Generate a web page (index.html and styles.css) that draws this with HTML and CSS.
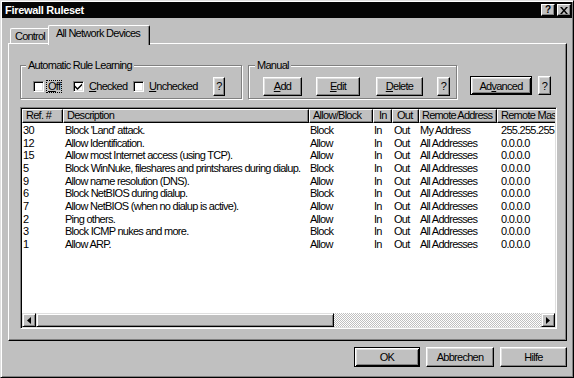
FILE: index.html
```html
<!DOCTYPE html>
<html>
<head>
<meta charset="utf-8">
<link rel="stylesheet" href="styles.css">
</head>
<body>
<div class="dialog">
  <div class="titlebar">
    <span class="title">Firewall Ruleset</span>
    <div class="tbtns">
      <div class="tbtn"><span class="qglyph">?</span></div>
      <div class="tbtn">
        <svg width="8" height="7" viewBox="0 0 8 7"><path d="M0 0h2l2 2.5L6 0h2L5 3.5 8 7H6L4 4.5 2 7H0l3-3.5z" fill="#000"/></svg>
      </div>
    </div>
  </div>
  <div class="body">
    <div class="tabs">
      <div class="tab">Control</div>
      <div class="tab active">All Network Devices</div>
    </div>
    <div class="panel">
      <div class="controls">
        <fieldset class="group auto">
          <legend>Automatic Rule Learning</legend>
          <div class="check c1"><span class="box"></span><span class="lbl focus"><u>O</u>ff</span></div>
          <div class="check c2"><span class="box"><svg width="7" height="7" viewBox="0 0 7 7"><path d="M0 2.5l2.5 2.5L7 0.5v2L2.5 7 0 4.5z" fill="#000"/></svg></span><span class="lbl"><u>C</u>hecked</span></div>
          <div class="check c3"><span class="box"></span><span class="lbl"><u>U</u>nchecked</span></div>
          <div class="btn qbtn small">?</div>
        </fieldset>
        <fieldset class="group manual">
          <legend>Manual</legend>
          <div class="btn b-add"><u>A</u>dd</div>
          <div class="btn b-edit"><u>E</u>dit</div>
          <div class="btn b-del"><u>D</u>elete</div>
          <div class="btn qbtn">?</div>
        </fieldset>
        <div class="btn default b-adv">Ad<u>v</u>anced</div>
        <div class="btn qbtn b-q2">?</div>
      </div>
      <div class="list">
        <div class="rows-area">
          <div class="grid header">
            <div class="hc">Ref. #</div>
            <div class="hc">Description</div>
            <div class="hc">Allow/Block</div>
            <div class="hc c-in">In</div>
            <div class="hc c-out">Out</div>
            <div class="hc c-ra">Remote Address</div>
            <div class="hc">Remote Mask</div>
          </div>
          <div class="rows">
            <div class="grid row"><span>30</span><span>Block 'Land' attack.</span><span>Block</span><span>In</span><span>Out</span><span>My Address</span><span class="mask">255.255.255.255</span></div>
            <div class="grid row"><span>12</span><span>Allow Identification.</span><span>Allow</span><span>In</span><span>Out</span><span>All Addresses</span><span class="mask">0.0.0.0</span></div>
            <div class="grid row"><span>15</span><span>Allow most Internet access (using TCP).</span><span>Allow</span><span>In</span><span>Out</span><span>All Addresses</span><span class="mask">0.0.0.0</span></div>
            <div class="grid row"><span>5</span><span>Block WinNuke, fileshares and printshares during dialup.</span><span>Block</span><span>In</span><span>Out</span><span>All Addresses</span><span class="mask">0.0.0.0</span></div>
            <div class="grid row"><span>9</span><span>Allow name resolution (DNS).</span><span>Allow</span><span>In</span><span>Out</span><span>All Addresses</span><span class="mask">0.0.0.0</span></div>
            <div class="grid row"><span>6</span><span>Block NetBIOS during dialup.</span><span>Block</span><span>In</span><span>Out</span><span>All Addresses</span><span class="mask">0.0.0.0</span></div>
            <div class="grid row"><span>7</span><span>Allow NetBIOS (when no dialup is active).</span><span>Allow</span><span>In</span><span>Out</span><span>All Addresses</span><span class="mask">0.0.0.0</span></div>
            <div class="grid row"><span>2</span><span>Ping others.</span><span>Allow</span><span>In</span><span>Out</span><span>All Addresses</span><span class="mask">0.0.0.0</span></div>
            <div class="grid row"><span>3</span><span>Block ICMP nukes and more.</span><span>Block</span><span>In</span><span>Out</span><span>All Addresses</span><span class="mask">0.0.0.0</span></div>
            <div class="grid row"><span>1</span><span>Allow ARP.</span><span>Allow</span><span>In</span><span>Out</span><span>All Addresses</span><span class="mask">0.0.0.0</span></div>
          </div>
        </div>
        <div class="hscroll">
          <div class="sbtn"><svg width="4" height="7" viewBox="0 0 4 7"><path d="M4 0v7L0 3.5z" fill="#000"/></svg></div>
          <div class="thumb"></div>
          <div class="track"></div>
          <div class="sbtn"><svg width="4" height="7" viewBox="0 0 4 7"><path d="M0 0v7l4-3.5z" fill="#000"/></svg></div>
        </div>
      </div>
    </div>
    <div class="footer">
      <div class="btn default b-ok">OK</div>
      <div class="btn b-cancel">Abbrechen</div>
      <div class="btn b-help">Hilfe</div>
    </div>
  </div>
</div>
</body>
</html>
```
FILE: styles.css
```css
* { box-sizing: border-box; }
html, body { margin: 0; padding: 0; }
body {
  width: 574px;
  height: 378px;
  overflow: hidden;
  background: #c0c0c0;
  font-family: "Liberation Sans", Arial, sans-serif;
  font-size: 11px;
  letter-spacing: -0.72px;
  color: #000;
}
u { text-decoration: underline; text-underline-offset: 1px; }

.dialog {
  width: 574px;
  height: 378px;
  display: flex;
  flex-direction: column;
  background: #c0c0c0;
  border: 1px solid;
  border-color: #dfdfdf #000 #000 #dfdfdf;
  box-shadow: inset 1px 1px #fff, inset -1px -1px #808080;
  padding: 1px 1px 2px 1px;
}

.titlebar {
  height: 16px;
  flex: none;
  background: #050505;
  color: #fff;
  display: flex;
  align-items: center;
  justify-content: space-between;
  padding: 0 1px 0 3px;
}
.title { font-weight: bold; letter-spacing: -0.3px; }
.tbtns { display: flex; gap: 2px; }
.tbtn {
  width: 14px;
  height: 12px;
  background: #c0c0c0;
  border: 1px solid;
  border-color: #fff #000 #000 #fff;
  box-shadow: inset -1px -1px #808080;
  display: flex;
  align-items: center;
  justify-content: center;
}
.qglyph { color: #000; font-weight: bold; font-size: 10px; line-height: 10px; letter-spacing: 0; }

.body {
  flex: 1;
  display: flex;
  flex-direction: column;
  padding: 7px 5px 0 6px;
}

.tabs {
  position: relative;
  z-index: 1;
  height: 18px;
  display: flex;
  align-items: flex-end;
  padding-left: 2px;
}
.tab {
  height: 15px;
  background: #c0c0c0;
  border-top: 1px solid #fff;
  border-left: 1px solid #fff;
  border-right: 1px solid #000;
  box-shadow: inset -1px 0 #808080;
  border-radius: 2px 2px 0 0;
  line-height: 13px;
  padding-top: 1px;
  white-space: nowrap;
}
.tab:first-child { width: 40px; padding-left: 4px; letter-spacing: -0.8px; }
.tab.active {
  width: 102px;
  height: 20px;
  margin-left: -2px;
  margin-bottom: -2px;
  padding-left: 7px;
  padding-top: 1px;
}

.panel {
  height: 298px;
  flex: none;
  border: 1px solid;
  border-color: #fff #000 #000 #fff;
  box-shadow: inset -1px -1px #808080;
  padding: 15px 0 0 11px;
}

.controls { display: flex; align-items: flex-start; }

.group {
  margin: 0;
  min-width: 0;
  height: 40px;
  border: 1px solid #808080;
  box-shadow: inset 1px 1px #fff, 1px 1px #fff;
  display: flex;
  align-items: center;
  padding: 2px 0 0 0;
}
.group legend {
  padding: 0 2px;
  line-height: 13px;
  background: #c0c0c0;
}
.auto { width: 222px; padding-left: 12px; }
.auto legend { margin-left: -7px; }
.manual { width: 209px; margin-left: 6px; padding-left: 14px; }
.manual legend { margin-left: -8px; }

.check { display: flex; align-items: center; height: 19px; }
.c1 { width: 40px; }
.c2 { width: 60px; }
.c3 { width: 80px; }
.box {
  width: 11px;
  height: 11px;
  background: #fff;
  border: 1px solid;
  border-color: #808080 #fff #fff #808080;
  box-shadow: inset 1px 1px #000, inset -1px -1px #dfdfdf;
  display: flex;
  align-items: center;
  justify-content: center;
}
.lbl { margin-left: 2px; padding: 0 1px; border: 1px dotted transparent; line-height: 11px; }
.c2 .lbl, .c3 .lbl { margin-left: 3px; }
.lbl.focus { border-color: #000; }

.btn {
  height: 19px;
  background: #c0c0c0;
  border: 1px solid;
  border-color: #fff #000 #000 #fff;
  box-shadow: inset -1px -1px #808080, inset 1px 1px #dfdfdf;
  display: flex;
  align-items: center;
  justify-content: center;
  flex: none;
}
.btn.default {
  border-color: #000;
  box-shadow: inset 1px 1px #fff, inset -1px -1px #000, inset 2px 2px #dfdfdf, inset -2px -2px #808080;
}
.qbtn { width: 13px; }
.qbtn.small { width: 12px; }
.b-add { width: 39px; }
.b-edit { width: 44px; margin-left: 14px; }
.b-del { width: 47px; margin-left: 16px; }
.manual .qbtn { margin-left: 14px; }
.b-adv { width: 62px; margin-left: 13px; margin-top: 17px; }
.b-q2 { margin-left: 6px; margin-top: 17px; }

.list {
  width: 537px;
  height: 222px;
  margin-top: 8px;
  border: 1px solid;
  border-color: #808080 #fff #fff #808080;
  box-shadow: inset 1px 1px #000, inset -1px -1px #dfdfdf;
  padding: 1px;
  display: flex;
  flex-direction: column;
}
.rows-area {
  flex: 1;
  background: #fff;
  overflow: hidden;
}
.rows { padding-top: 1px; }
.grid {
  display: grid;
  grid-template-columns: 41px 246px 64px 19px 27px 78px 90px;
  width: 565px;
  white-space: nowrap;
}
.header { height: 14px; }
.hc {
  height: 14px;
  background: #c0c0c0;
  border: 1px solid;
  border-color: #fff #000 #000 #fff;
  box-shadow: inset -1px -1px #808080;
  line-height: 11px;
  padding-left: 3px;
  overflow: hidden;
}
.hc.c-in { padding-left: 5px; }
.hc.c-out { padding-left: 4px; }
.hc.c-ra { padding-left: 2px; letter-spacing: -0.8px; }
.row { height: 12.67px; line-height: 12.67px; }
.row span { padding-left: 1px; overflow: hidden; }
.row span:nth-child(2) { padding-left: 2px; }
.row span:nth-child(5) { padding-left: 2px; }
.row span.mask { padding-left: 4px; }

.hscroll { height: 14px; display: flex; flex: none; }
.sbtn {
  width: 14px;
  height: 14px;
  background: #c0c0c0;
  border: 1px solid;
  border-color: #dfdfdf #000 #000 #dfdfdf;
  box-shadow: inset 1px 1px #fff, inset -1px -1px #808080;
  display: flex;
  align-items: center;
  justify-content: center;
  flex: none;
}
.thumb {
  width: 298px;
  height: 14px;
  background: #c0c0c0;
  border: 1px solid;
  border-color: #dfdfdf #000 #000 #dfdfdf;
  box-shadow: inset 1px 1px #fff, inset -1px -1px #808080;
  flex: none;
}
.track {
  flex: 1;
  background: repeating-conic-gradient(#c0c0c0 0 25%, #fff 0 50%) 0 0 / 2px 2px;
}

.footer {
  display: flex;
  justify-content: flex-end;
  gap: 6px;
  margin-top: 6px;
}
.b-ok { width: 66px; height: 20px; }
.b-cancel { width: 68px; height: 20px; }
.b-help { width: 67px; height: 20px; }
```
